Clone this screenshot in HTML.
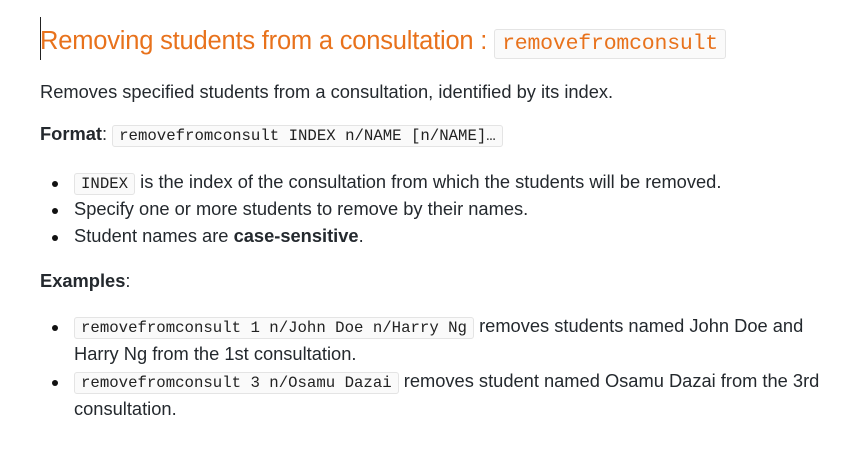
<!DOCTYPE html>
<html><head><meta charset="utf-8"><style>
body{margin:0;width:848px;height:452px;background:#fff;font-family:"Liberation Sans",sans-serif;color:#24292e;font-size:18.3px;position:relative;overflow:hidden}
.l{position:absolute;left:40px;white-space:nowrap;line-height:27px}
code{font-family:"Liberation Mono",monospace;font-size:15.7px;border:1px solid #e4e4e4;border-radius:3px;background:#fafafa;padding:1px 6px;color:#222}
h1{position:absolute;left:40px;top:24px;margin:0;font-weight:normal;font-size:25.5px;color:#e8721c;white-space:nowrap;line-height:34px;letter-spacing:-0.2px}
h1 code{font-size:21.5px;color:#e8721c;padding:2px 7px}
.caret{position:absolute;left:40px;top:17px;width:1px;height:43px;background:#222}
.dot{position:absolute;left:52px;width:6px;height:6px;border-radius:50%;background:#111}
.b{left:74px}
</style></head><body>
<div class="caret"></div>
<h1>Removing students from a consultation : <code>removefromconsult</code></h1>
<div class="l" style="top:78px">Removes specified students from a consultation, identified by its index.</div>
<div class="l" style="top:120px"><b>Format</b>: <code>removefromconsult INDEX n/NAME [n/NAME]…</code></div>
<div class="dot" style="top:181px"></div><div class="l b" style="top:168px"><code>INDEX</code> is the index of the consultation from which the students will be removed.</div>
<div class="dot" style="top:208px"></div><div class="l b" style="top:195px">Specify one or more students to remove by their names.</div>
<div class="dot" style="top:235px"></div><div class="l b" style="top:222px">Student names are <b>case-sensitive</b>.</div>
<div class="l" style="top:267px"><b>Examples</b>:</div>
<div class="dot" style="top:325px"></div><div class="l b" style="top:312px"><code>removefromconsult 1 n/John Doe n/Harry Ng</code> removes students named John Doe and</div>
<div class="l b" style="top:340px">Harry Ng from the 1st consultation.</div>
<div class="dot" style="top:380px"></div><div class="l b" style="top:367px"><code>removefromconsult 3 n/Osamu Dazai</code> removes student named Osamu Dazai from the 3rd</div>
<div class="l b" style="top:395px">consultation.</div>
</body></html>
